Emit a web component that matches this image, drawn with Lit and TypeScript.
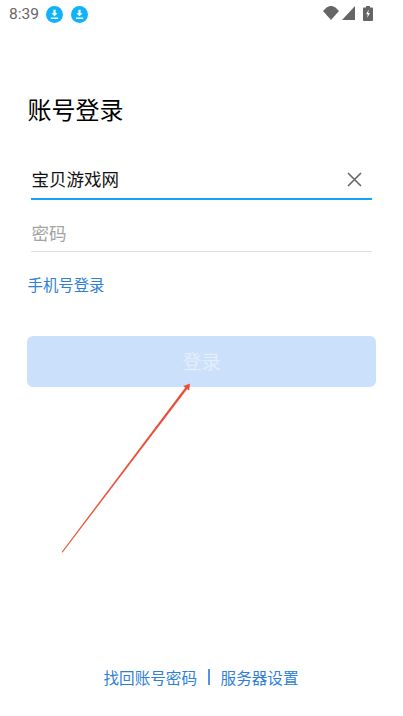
import {html, css, LitElement} from 'lit';
import {customElement} from 'lit/decorators.js';

const downloadBadge = html`
  <svg class="badge" viewBox="0 0 17 17" width="17" height="17">
    <circle cx="8.5" cy="8.5" r="8.5" fill="#0fb2fb"></circle>
    <path d="M7.4 3.8h2.2v3.4h2L8.5 10.2 5.4 7.2h2zM4.9 11.6h7.2v1.4H4.9z" fill="#fff"></path>
  </svg>
`;

@customElement('app-root')
export class AppRoot extends LitElement {
  static styles = css`
    :host {
      display: block;
      position: relative;
      width: 403px;
      height: 716px;
      overflow: hidden;
      background: #fff;
      font-family: "Roboto", "Noto Sans CJK SC", sans-serif;
    }

    .page {
      display: flex;
      flex-direction: column;
      height: 716px;
    }

    .status {
      display: flex;
      align-items: center;
      height: 28px;
      padding: 0 30px 0 9px;
      color: #666;
      font-size: 15.5px;
    }

    .time {
      width: 37px;
    }

    .badge {
      margin-right: 7.5px;
    }

    .status-right {
      display: flex;
      align-items: center;
      margin: 0 0 2px auto;
    }

    .signal {
      margin: 0 8px 0 3px;
    }

    h1 {
      margin: 68px 0 0 27.5px;
      height: 31px;
      font-size: 24px;
      line-height: 30px;
      font-weight: 400;
      color: #000;
    }

    .field {
      display: flex;
      align-items: center;
      justify-content: space-between;
      height: 50px;
      margin: 0 31px;
      box-sizing: border-box;
      padding: 0 0.5px;
      font-size: 17.5px;
      border-bottom: 1px solid #dedede;
    }

    .field.name {
      margin-top: 23px;
      color: #111;
      border-bottom: 2px solid #16a3f3;
      padding-top: 9px;
    }

    .field.password {
      margin-top: 3px;
      height: 49px;
      padding-top: 10px;
      color: #a3a3a3;
    }

    .clear {
      margin: 2px 9.5px 0 0;
    }

    .phone {
      margin: 23px 0 0 27.5px;
      height: 22px;
      line-height: 22px;
      font-size: 15.4px;
      color: #2f7fd6;
    }

    .login {
      display: flex;
      align-items: center;
      justify-content: center;
      box-sizing: border-box;
      height: 51px;
      margin: 39px 27px 0;
      padding-bottom: 2px;
      border-radius: 6px;
      background: #cbe0fb;
      color: #e4eefb;
      font-size: 19px;
    }

    .footer {
      display: flex;
      align-items: center;
      justify-content: center;
      margin-top: auto;
      margin-bottom: 27px;
      padding-right: 1px;
      height: 24px;
      font-size: 15.6px;
      color: #2f7fd6;
    }

    .divider {
      width: 1.5px;
      height: 16px;
      margin: 0 11px;
      background: #4f94de;
    }

    .arrow {
      position: absolute;
      left: 0;
      top: 0;
      pointer-events: none;
    }
  `;

  render() {
    return html`
      <div class="page">
        <div class="status">
          <span class="time">8:39</span>
          ${downloadBadge}${downloadBadge}
          <div class="status-right">
            <svg viewBox="0 0 16 14" width="16" height="14">
              <path d="M0 5 3.5 1.6C5 .6 6.5 0 8 0s3 .6 4.5 1.6L16 5l-8 9z" fill="#666"></path>
            </svg>
            <svg class="signal" viewBox="0 0 13 14" width="13" height="14">
              <path d="M13 0v14H0z" fill="#666"></path>
            </svg>
            <svg viewBox="0 0 10 15" width="10" height="15">
              <path d="M3 0h4v1.5h2.2a.8.8 0 0 1 .8.8v11.9a.8.8 0 0 1-.8.8H.8a.8.8 0 0 1-.8-.8V2.3a.8.8 0 0 1 .8-.8H3z" fill="#666"></path>
              <path d="M5.7 3.5 3.1 8.2h1.7L4.2 12l2.7-5H5.2z" fill="#fff"></path>
            </svg>
          </div>
        </div>

        <h1>账号登录</h1>

        <div class="field name">
          <span>宝贝游戏网</span>
          <svg class="clear" viewBox="0 0 15 15" width="15" height="15">
            <path d="M1 1l13 13M14 1 1 14" stroke="#666" stroke-width="1.6" fill="none"></path>
          </svg>
        </div>
        <div class="field password"><span>密码</span></div>

        <div class="phone">手机号登录</div>

        <div class="login">登录</div>

        <div class="footer">
          <span>找回账号密码</span>
          <span class="divider"></span>
          <span>服务器设置</span>
        </div>
      </div>

      <svg class="arrow" width="403" height="716" viewBox="0 0 403 716">
        <path d="M62 552 185.6 387.6l-1.8-1.4L189.6 384l-.7 6.1-1.8-1.4L62.4 552.3z" fill="#ea4a30" stroke="#ea4a30" stroke-width=".6" stroke-linejoin="round"></path>
      </svg>
    `;
  }
}
